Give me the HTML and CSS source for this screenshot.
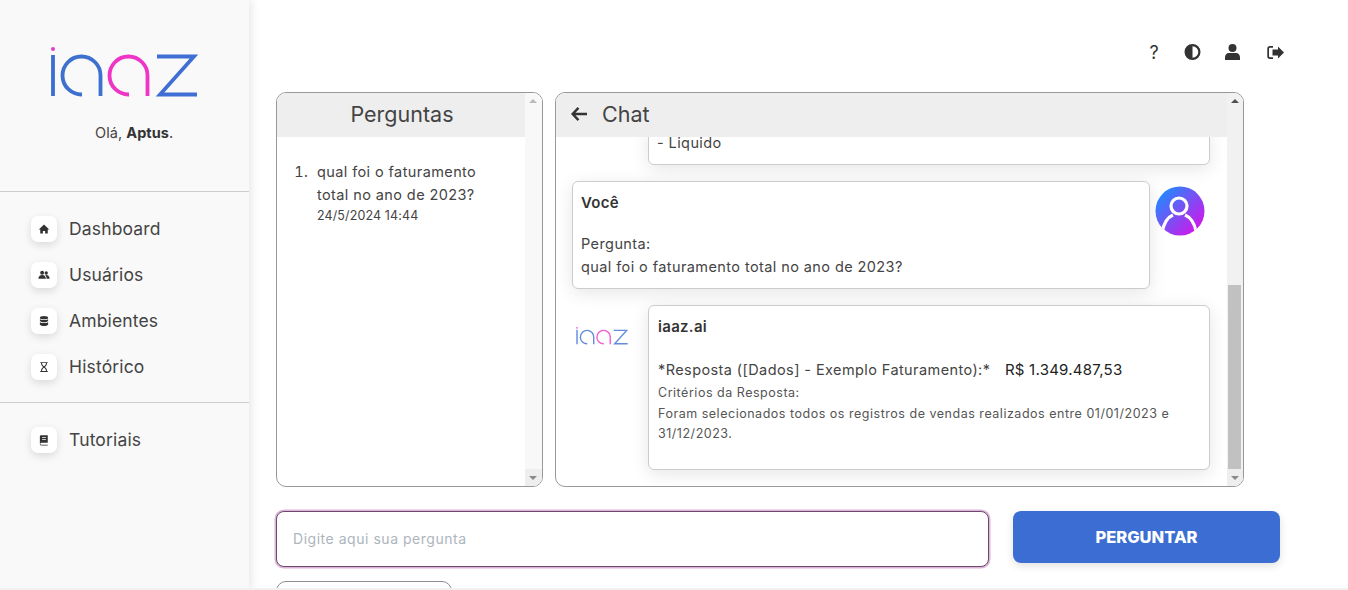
FILE: index.html
```html
<!DOCTYPE html>
<html lang="pt-BR">
<head>
<meta charset="utf-8">
<title>iaaz</title>
<link rel="stylesheet" href="styles.css">
</head>
<body>
<div class="app">
  <aside class="sidebar">
    <div class="brand">
      <svg class="logo" viewBox="48 44 152 54" aria-label="iaaz">
        <circle cx="53" cy="49" r="2" fill="#e63bc8"/>
        <path d="M53 55V96" stroke="#3a6fd0"/>
        <path d="M82 94.500A19 19 0 1 1 100.500 75.500V96" stroke="#3d70cf"/>
        <path d="M129 94.500A19 19 0 1 1 147.500 75.500V96" stroke="#ee35c6"/>
        <path d="M157 56.500H194L160 94.500H197" stroke="#3f6fd3"/>
      </svg>
      <p class="hello">Olá, <b>Aptus</b>.</p>
    </div>
    <nav class="nav nav-main">
      <a class="nav-item"><span class="nav-icon"><svg viewBox="0 0 16 16"><path d="M8 2 1 8.500h2V14h3.500v-3.500h3V14H13V8.500h2z"/></svg></span>Dashboard</a>
      <a class="nav-item"><span class="nav-icon"><svg viewBox="0 0 16 16"><circle cx="5.500" cy="5" r="2.600"/><circle cx="11" cy="5.300" r="2.200"/><path d="M.5 13c0-3 2-5 5-5s5 2 5 5zM11.500 13c0-2-.6-3.500-1.800-4.700 3-1 5.800.9 5.800 4.700z"/></svg></span>Usuários</a>
      <a class="nav-item"><span class="nav-icon"><svg viewBox="0 0 16 16"><ellipse cx="8" cy="3.500" rx="5.500" ry="2.200"/><path d="M2.500 5.500v2.200c0 1.200 2.500 2 5.500 2s5.500-.8 5.500-2V5.500C12 7 4 7 2.500 5.500zM2.500 9.700v2.800c0 1.200 2.500 2 5.500 2s5.500-.8 5.500-2V9.700C12 11.200 4 11.200 2.500 9.700z"/></svg></span>Ambientes</a>
      <a class="nav-item"><span class="nav-icon"><svg viewBox="0 0 16 16"><path d="M3 1.500h10v1.300h-1c0 3-1.500 4-2.800 5.200C10.500 9.200 12 10.200 12 13.200h1v1.300H3v-1.300h1c0-3 1.500-4 2.800-5.200C5.500 6.800 4 5.800 4 2.800H3zM5.400 2.800c0 2.300 1.300 3.300 2.600 4.300 1.300-1 2.600-2 2.600-4.300zM8 9c-1.300 1-2.600 2-2.600 4.200h5.200C10.600 11 9.300 10 8 9z"/></svg></span>Histórico</a>
    </nav>
    <nav class="nav nav-extra">
      <a class="nav-item"><span class="nav-icon"><svg viewBox="0 0 16 16"><path d="M4 1.500h9v10H4.500a1 1 0 0 0 0 2.800H13v.9H4A1.800 1.800 0 0 1 2.500 13.500V3A1.500 1.500 0 0 1 4 1.500zM5.500 4v1h5V4zM5.500 6.500v1h5v-1z" fill-rule="evenodd"/></svg></span>Tutoriais</a>
    </nav>
  </aside>

  <main class="main">
    <div class="toolbar">
      <span class="tool-q">?</span>
      <svg class="tool tool-half" viewBox="0 0 16 16"><path fill-rule="evenodd" d="M8 0a8 8 0 1 0 0 16A8 8 0 0 0 8 0zm0 2.200a5.800 5.800 0 0 1 0 11.600z"/></svg>
      <svg class="tool tool-user" viewBox="0 0 15 16"><circle cx="7.500" cy="4" r="4"/><path d="M4 9h7c2.400 0 4 2 4 4.500V16H0v-2.500C0 11 1.600 9 4 9z"/></svg>
      <svg class="tool tool-exit" viewBox="0 0 17 13"><path d="M6 0v1.700H3A1 1 0 0 0 2 2.700v7.600a1 1 0 0 0 1 1h3V13H3a2.700 2.700 0 0 1-2.700-2.700V2.700A2.700 2.700 0 0 1 3 0z"/><path d="M11 .5 17 6.500l-6 6V9.500H5.500v-6H11z"/></svg>
    </div>

    <div class="panels">
      <section class="panel panel-list">
        <div class="panel-col">
          <h2 class="panel-head head-center">Perguntas</h2>
          <ol class="questions">
            <li>qual foi o faturamento total no ano de 2023?<small>24/5/2024 14:44</small></li>
          </ol>
        </div>
        <div class="scrollbar scrollbar-idle">
          <span class="arrow arrow-up"></span>
          <span class="track"></span>
          <span class="arrow arrow-down"></span>
        </div>
      </section>

      <section class="panel panel-chat">
        <div class="panel-col">
          <h2 class="panel-head">
            <svg class="back" viewBox="0 0 15 13"><path d="M7 .8 1.500 6.500 7 12.200M2 6.500h13" fill="none" stroke="#333" stroke-width="2.300"/></svg>
            Chat
          </h2>
          <div class="messages">
            <div class="msg msg-bot">
              <div class="msg-side"></div>
              <div class="bubble bubble-cut"><p>- Liquido</p></div>
            </div>
            <div class="msg msg-user">
              <div class="bubble">
                <h3>Você</h3>
                <p>Pergunta:<br>qual foi o faturamento total no ano de 2023?</p>
              </div>
              <svg class="avatar" viewBox="0 0 50 50">
                <defs>
                  <linearGradient id="av" x1="0" y1="0" x2="1" y2="1">
                    <stop offset="0.100" stop-color="#1f8bff"/>
                    <stop offset="0.900" stop-color="#d414ea"/>
                  </linearGradient>
                  <clipPath id="avc"><circle cx="25" cy="25" r="24.500"/></clipPath>
                </defs>
                <circle cx="25" cy="25" r="24.500" fill="url(#av)"/>
                <g clip-path="url(#avc)" fill="none" stroke="#fff" stroke-width="3.200">
                  <circle cx="24" cy="20" r="8"/>
                  <path d="M7 46C9 37 13 31 18 29M41 46C40 37 35 31 30 29"/>
                </g>
              </svg>
            </div>
            <div class="msg msg-bot">
              <div class="msg-side">
                <svg class="mini-logo" viewBox="48 44 152 54" aria-label="iaaz">
                  <circle cx="53" cy="49" r="2.500" fill="#e63bc8"/>
                  <path d="M53 55V96" stroke="#3a6fd0"/>
                  <path d="M82 94.500A19 19 0 1 1 100.500 75.500V96" stroke="#3d70cf"/>
                  <path d="M129 94.500A19 19 0 1 1 147.500 75.500V96" stroke="#ee35c6"/>
                  <path d="M157 56.500H194L160 94.500H197" stroke="#3f6fd3"/>
                </svg>
              </div>
              <div class="bubble bubble-answer">
                <h3>iaaz.ai</h3>
                <p class="answer-line">*Resposta ([Dados] - Exemplo Faturamento):* <span class="value">R$ 1.349.487,53</span></p>
                <p class="criteria">Critérios da Resposta:<br>Foram selecionados todos os registros de vendas realizados entre 01/01/2023 e 31/12/2023.</p>
              </div>
            </div>
          </div>
        </div>
        <div class="scrollbar scrollbar-chat">
          <span class="arrow arrow-up dark"></span>
          <span class="track"><span class="thumb"></span></span>
          <span class="arrow arrow-down"></span>
        </div>
      </section>
    </div>

    <div class="ask">
      <input class="ask-input" type="text" placeholder="Digite aqui sua pergunta">
      <button class="ask-button" type="button">PERGUNTAR</button>
    </div>
    <div class="cut-button"></div>
  </main>
</div>
<div class="bottom-strip"></div>
</body>
</html>
```
FILE: styles.css
```css
* { box-sizing: border-box; }
html, body { margin: 0; height: 590px; overflow: hidden; background: #fff; }
body { font-family: Inter, "Noto Sans", "Liberation Sans", sans-serif; color: #444; position: relative; }
h2, h3, p, ol { margin: 0; padding: 0; }

.app { display: flex; height: 590px; }

.sidebar { width: 249px; flex: none; background: #f9f9f9; box-shadow: 3px 0 8px rgba(0,0,0,.09); }
.brand { height: 192px; border-bottom: 1px solid #ccc; padding: 44px 0 0 48px; }
.logo { display: block; width: 152px; height: 54px; fill: none; stroke-width: 4; }
.logo path { stroke-width: 3.800; fill: none; }
.hello { margin: 25px 0 0 47px; font-size: 14.500px; line-height: 20px; letter-spacing: .05px; color: #444; }
.hello b { font-weight: 700; color: #333; }

.nav { padding: 0 0 0 31px; }
.nav-main { padding-top: 14px; padding-bottom: 12px; border-bottom: 1px solid #ccc; }
.nav-extra { padding-top: 14px; }
.nav-item { display: flex; align-items: center; height: 46px; padding-bottom: 2px; font-size: 17.500px; letter-spacing: .15px; color: #444; }
.nav-icon { width: 26px; height: 26px; margin: 2px 12px 0 0; border-radius: 7px; background: #fff; box-shadow: 0 3px 8px rgba(0,0,0,.13); display: flex; align-items: center; justify-content: center; }
.nav-icon svg { width: 12px; height: 12px; fill: #333; }

.main { flex: 1; min-width: 0; padding: 0 0 0 27px; }

.toolbar { height: 92px; width: 1008px; padding: 44px 0 0 0; display: flex; justify-content: flex-end; align-items: flex-start; }
.tool { fill: #333; flex: none; }
.tool-q { font-size: 18px; line-height: 18px; color: #333; text-align: center; width: 16px; }
.tool-half { width: 17px; height: 16px; margin-left: 22px; }
.tool-user { width: 15px; height: 16px; margin-left: 24px; }
.tool-exit { width: 17px; height: 13px; margin: 2px 0 0 27px; }

.panels { display: flex; gap: 12px; height: 395px; }
.panel { display: flex; border: 1px solid #999; border-radius: 10px; overflow: hidden; background: #fff; }
.panel-list { width: 267px; }
.panel-chat { width: 689px; }
.panel-col { flex: 1; min-width: 0; display: flex; flex-direction: column; }
.panel-head { height: 44px; flex: none; background: #eee; font-size: 21.500px; font-weight: 400; line-height: 40px; color: #444; padding: 0 0 2px 15px; display: flex; align-items: center; position: relative; z-index: 1; }
.head-center { justify-content: center; padding: 0 0 2px 2px; }
.back { width: 16px; height: 14px; margin-right: 15px; }

.questions { padding: 23px 40px 0 40px; font-size: 14.500px; line-height: 23px; letter-spacing: .4px; color: #444; }
.questions li::marker { content: "1.\00a0\00a0"; }
.questions small { display: block; font-size: 12.500px; line-height: 20px; letter-spacing: .12px; }

.scrollbar { width: 17px; flex: none; display: flex; flex-direction: column; background: #f1f1f1; }
.scrollbar-idle { background: #f8f8f8; }
.scrollbar-chat { width: 16px; }
.track { flex: 1; display: flex; flex-direction: column; justify-content: flex-end; }
.thumb { display: block; height: 184px; margin: 0 2px 0 1px; background: #c1c1c1; }
.arrow { height: 17px; flex: none; position: relative; }
.arrow::after { content: ""; position: absolute; left: 4px; border-left: 4px solid transparent; border-right: 4px solid transparent; }
.arrow-up::after { top: 6px; border-bottom: 4px solid #bbb; }
.arrow-up.dark::after { border-bottom-color: #505050; }
.arrow-down { background: #eee; }
.arrow-down::after { top: 7px; border-top: 4px solid #8a8a8a; }

.messages { flex: 1; min-height: 0; overflow: hidden; display: flex; flex-direction: column; justify-content: flex-end; gap: 16px; padding: 0 16px 16px 16px; }
.msg { display: flex; flex: none; }
.msg-side { width: 76px; flex: none; display: flex; padding-top: 21px; padding-left: 3px; }
.mini-logo { width: 54px; height: 19px; fill: none; opacity: .8; }
.mini-logo path { stroke-width: 4; fill: none; }
.msg-user .bubble { width: 578px; }
.avatar { width: 50px; height: 50px; margin: 5px 0 0 5px; flex: none; }
.bubble { width: 562px; background: #fff; border: 1px solid #ccc; border-radius: 6px; box-shadow: 0 4px 18px rgba(0,0,0,.1); padding: 9px 8px; font-size: 14.500px; line-height: 23px; letter-spacing: .41px; color: #444; }
.bubble h3 { font-size: 15px; font-weight: 600; line-height: 23px; letter-spacing: .3px; color: #333; margin-bottom: 18px; }
.bubble-cut { padding-bottom: 16px; }
.bubble-cut p { line-height: 10px; }
.msg-user .bubble { padding-bottom: 10px; }
.bubble-answer { height: 165px; padding: 9px; }
.bubble-answer h3 { margin-bottom: 20px; }
.answer-line { line-height: 23px; }
.value { color: #222; margin-left: 10px; font-size: 15px; letter-spacing: .25px; }
.criteria { font-size: 12.500px; line-height: 20.500px; margin-top: 2px; letter-spacing: .52px; color: #555; }

.ask { display: flex; gap: 24px; margin-top: 24px; align-items: flex-start; width: 1004px; }
.ask-input { width: 713px; height: 56px; flex: none; border: 1px solid #6b4a6b; outline: 0; box-shadow: 0 0 0 1.500px #dcb4d8; border-radius: 8px; background: #fff; padding: 0 16px 2px; font: 14px Inter, "Noto Sans", sans-serif; letter-spacing: .53px; color: #444; }
.ask-input::placeholder { color: #adb5bd; opacity: 1; }
.ask-button { width: 267px; height: 52px; flex: none; border: 0; border-radius: 8px; background: #3b6dd2; color: #fff; font: 800 16.500px Inter, "Noto Sans", sans-serif; box-shadow: 0 3px 8px rgba(0,0,0,.12); }

.cut-button { width: 176px; height: 20px; margin-top: 14px; border: 1px solid #8a8f96; border-radius: 10px 10px 0 0; }
.bottom-strip { position: absolute; left: 0; right: 0; bottom: 0; height: 2px; background: #f1f1f1; }
```
